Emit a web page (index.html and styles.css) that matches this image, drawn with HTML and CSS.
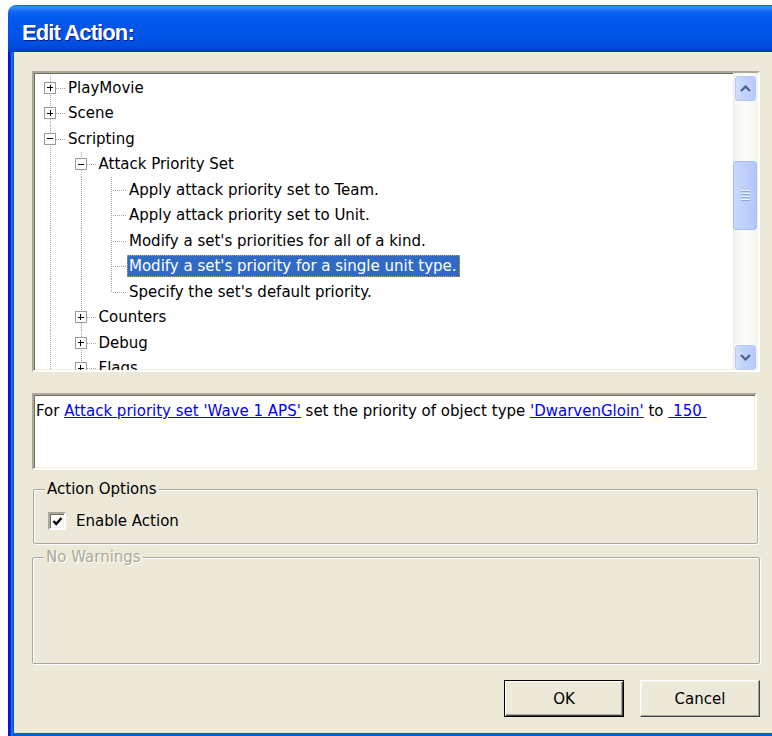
FILE: index.html
```html
<!DOCTYPE html>
<html>
<head>
<meta charset="utf-8">
<title>Edit Action</title>
<link rel="stylesheet" href="styles.css">
</head>
<body>
<div class="window">
  <div class="titlebar"><span class="title">Edit Action:</span></div>
  <div class="frame">
    <div class="client">

      <div class="tree sunken">
        <div class="tree-body">
          <div class="row">
            <span class="g t"><i class="box plus"></i></span>
            <span class="label">PlayMovie</span>
          </div>
          <div class="row">
            <span class="g t"><i class="box plus"></i></span>
            <span class="label">Scene</span>
          </div>
          <div class="row">
            <span class="g t"><i class="box minus"></i></span>
            <span class="label">Scripting</span>
          </div>
          <div class="row">
            <span class="g v"></span>
            <span class="g t"><i class="box minus"></i></span>
            <span class="label">Attack Priority Set</span>
          </div>
          <div class="row">
            <span class="g v"></span><span class="g v"></span><span class="g t"></span>
            <span class="label">Apply attack priority set to Team.</span>
          </div>
          <div class="row">
            <span class="g v"></span><span class="g v"></span><span class="g t"></span>
            <span class="label">Apply attack priority set to Unit.</span>
          </div>
          <div class="row">
            <span class="g v"></span><span class="g v"></span><span class="g t"></span>
            <span class="label">Modify a set's priorities for all of a kind.</span>
          </div>
          <div class="row">
            <span class="g v"></span><span class="g v"></span><span class="g t"></span>
            <span class="label selected">Modify a set's priority for a single unit type.</span>
          </div>
          <div class="row">
            <span class="g v"></span><span class="g v"></span><span class="g e"></span>
            <span class="label">Specify the set's default priority.</span>
          </div>
          <div class="row">
            <span class="g v"></span>
            <span class="g t"><i class="box plus"></i></span>
            <span class="label">Counters</span>
          </div>
          <div class="row">
            <span class="g v"></span>
            <span class="g t"><i class="box plus"></i></span>
            <span class="label">Debug</span>
          </div>
          <div class="row">
            <span class="g v"></span>
            <span class="g t"><i class="box plus"></i></span>
            <span class="label">Flags</span>
          </div>
        </div>
        <div class="vscroll">
          <div class="sbtn">
            <svg width="11" height="7" viewBox="0 0 11 7"><path d="M1 6 L5.5 1.5 L10 6" fill="none" stroke="#4d6185" stroke-width="2.2"/></svg>
          </div>
          <div class="track">
            <div class="thumb"><span class="grip"></span></div>
          </div>
          <div class="sbtn">
            <svg width="11" height="7" viewBox="0 0 11 7"><path d="M1 1 L5.5 5.5 L10 1" fill="none" stroke="#4d6185" stroke-width="2.2"/></svg>
          </div>
        </div>
      </div>

      <div class="desc sunken">
        For <a href="#">Attack priority set 'Wave 1 APS'</a> set the priority of object type <a href="#">'DwarvenGloin'</a> to <a href="#">&nbsp;150&nbsp;</a>
      </div>

      <div class="group options">
        <span class="group-title">Action Options</span>
        <label class="check">
          <span class="checkbox">
            <svg width="11" height="11" viewBox="0 0 11 11"><path d="M1.5 5 L4.2 8 L9.5 2" fill="none" stroke="#000" stroke-width="2.4"/></svg>
          </span>
          <span>Enable Action</span>
        </label>
      </div>

      <div class="group warnings">
        <span class="group-title disabled">No Warnings</span>
      </div>

      <div class="buttons">
        <button class="btn default">OK</button>
        <button class="btn">Cancel</button>
      </div>

    </div>
  </div>
</div>
</body>
</html>
```
FILE: styles.css
```css
html, body {
  margin: 0;
  padding: 0;
  background: #fff;
  width: 772px;
  height: 736px;
  overflow: hidden;
}

body {
  font-family: "DejaVu Sans", Verdana, sans-serif;
  font-size: 15px;
  color: #000;
}

.window {
  margin: 5px 0 0 8px;
  width: 764px;
  border-radius: 8px 0 0 0;
  overflow: hidden;
}

/* Luna title bar */
.titlebar {
  height: 47px;
  box-sizing: border-box;
  padding: 9px 0 0 14px;
  background:
    linear-gradient(to bottom,
      #0a5fe8 0px, #3b8cff 2px, #2a7cfb 4px, #0d63f2 7px,
      #0058ec 14px, #0054e6 30px, #004edf 40px, #0046d5 44px, #0038b8 47px);
}

.title {
  display: block;
  color: #fff;
  font-family: "Liberation Sans", Arial, sans-serif;
  font-weight: bold;
  font-size: 22px;
  line-height: 37px;
  letter-spacing: -0.9px;
  text-shadow: 1px 1px 0 #0a1883;
}

/* blue window border around the client area */
.frame {
  padding: 0 0 3px 6px;
  background:
    linear-gradient(to right, #0019cf 0, #0019cf 2px, #0831d9 2px, #0831d9 3px,
      #166aee 3px, #166aee 5px, #0855dd 5px, #0855dd 6px, #0058ee 6px);
}

.client {
  background: #ece9d8;
  height: 681px;
  box-sizing: border-box;
  padding: 19px 12px 0 18px;
  display: flex;
  flex-direction: column;
}

/* 3D sunken edge used by the list and the description */
.sunken {
  border-style: solid;
  border-width: 2px;
  border-color: #aca899 #fff #fff #aca899;
  box-shadow: inset 1px 1px 0 #716f64, inset -1px -1px 0 #f1efe2;
  background: #fff;
}

/* tree view */
.tree {
  height: 301px;
  box-sizing: border-box;
  display: flex;
}

.tree-body {
  flex: 1;
  overflow: hidden;
  padding: 2px 0 0 1px;
}

.row {
  display: flex;
  align-items: center;
  height: 25.5px;
}

.g {
  position: relative;
  flex: none;
  width: 30.5px;
  align-self: stretch;
}

.g.v::before,
.g.t::before,
.g.e::before {
  content: "";
  position: absolute;
  left: 15px;
  top: 0;
  width: 1px;
  height: 100%;
  background: linear-gradient(to bottom, #a8a8a8 50%, transparent 50%);
  background-size: 1px 2px;
}

.g.e::before {
  height: 50%;
}

.g.t::after,
.g.e::after {
  content: "";
  position: absolute;
  left: 16px;
  right: 0;
  top: 50%;
  height: 1px;
  background: linear-gradient(to right, transparent 50%, #a8a8a8 50%);
  background-size: 2px 1px;
}

/* expand / collapse boxes sit over the connector lines */
.box {
  position: absolute;
  left: 9px;
  top: 50%;
  margin-top: -6px;
  width: 12px;
  height: 12px;
  box-sizing: border-box;
  border: 1px solid #a09d8f;
  background: #fff;
  z-index: 1;
}

.box::before,
.box.plus::after {
  content: "";
  position: absolute;
  background: #000;
}

.box::before {
  left: 2px;
  right: 2px;
  top: 4.5px;
  height: 1px;
}

.box.plus::after {
  top: 2px;
  bottom: 2px;
  left: 4.5px;
  width: 1px;
}

.label {
  line-height: 22px;
  padding: 0 3px 0 2.5px;
  white-space: nowrap;
}

.label.selected {
  background: #316ac5;
  color: #fff;
  outline: 1px dotted #d8a030;
  outline-offset: -1px;
}

/* Luna vertical scrollbar */
.vscroll {
  flex: none;
  width: 25px;
  display: flex;
  flex-direction: column;
  background: linear-gradient(to right, #eeede5 0, #f6f5f0 3px, #fcfcfa 12px, #f4f3ee 100%);
}

.sbtn {
  flex: none;
  height: 25px;
  margin: 3px 2px 0 2px;
  box-sizing: border-box;
  border: 1px solid #b9cbf3;
  border-radius: 3px;
  background: linear-gradient(to right, #d2defc, #c2d3fb 40%, #b8cbf8);
  display: flex;
  align-items: center;
  justify-content: center;
}

.sbtn:last-child {
  margin: 0 2px 0 2px;
}

.track {
  flex: 1;
  padding-top: 60px;
}

.thumb {
  height: 69px;
  margin: 0 1px 0 0;
  box-sizing: border-box;
  border: 1px solid #a6bcf1;
  border-radius: 3px;
  background: linear-gradient(to right, #c9d8fc, #bed0fb 50%, #b4c8f7);
  display: flex;
  align-items: center;
  justify-content: center;
}

.grip {
  width: 9px;
  height: 11px;
  background: linear-gradient(to bottom, #eef3ff 0 1px, #8ca8e8 1px 2px, transparent 2px 3px);
  background-size: 9px 3px;
}

/* description of the selected action */
.desc {
  margin: 21px 3px 0 0;
  height: 77px;
  box-sizing: border-box;
  padding: 7px 0 0 2px;
  line-height: 18px;
  white-space: nowrap;
}

.desc a {
  color: #0000ff;
  text-decoration: underline;
}

/* etched group boxes */
.group {
  border: 1px solid #aca899;
  box-shadow: inset 1px 1px 0 #fff, 1px 1px 0 #fff;
  border-radius: 2px;
  display: flex;
  flex-direction: column;
  align-items: flex-start;
}

.group-title {
  margin: -10px 0 0 11px;
  padding: 0 2px;
  background: #ece9d8;
  line-height: 18px;
}

.group-title.disabled {
  color: #aca899;
  text-shadow: 1px 1px 0 #fff;
}

.options {
  margin: 19px 2px 0 1px;
  height: 55px;
  box-sizing: border-box;
}

.warnings {
  margin: 13px 0 0 0;
  height: 107px;
  box-sizing: border-box;
}

.check {
  display: flex;
  align-items: center;
  height: 22px;
  margin: 12px 0 0 14px;
}

.checkbox {
  width: 18px;
  height: 18px;
  box-sizing: border-box;
  border-style: solid;
  border-width: 2px;
  border-color: #aca899 #fff #fff #aca899;
  box-shadow: inset 1px 1px 0 #716f64, inset -1px -1px 0 #f1efe2;
  background: #fff;
  display: flex;
  align-items: center;
  justify-content: center;
  margin-right: 10px;
}

/* dialog buttons */
.buttons {
  margin-top: 16px;
  display: flex;
  justify-content: flex-end;
  gap: 16px;
}

.btn {
  width: 120px;
  height: 37px;
  font: inherit;
  color: #000;
  background: #ece9d8;
  border-style: solid;
  border-width: 1px;
  border-color: #fff #404040 #404040 #fff;
  box-shadow: inset -1px -1px 0 #aca899, inset 1px 1px 0 #f4f3ee;
  padding: 0;
}

.btn.default {
  border: 1px solid #000;
  box-shadow: inset 1px 1px 0 #fff, inset -1px -1px 0 #404040, inset -2px -2px 0 #aca899;
}
```
